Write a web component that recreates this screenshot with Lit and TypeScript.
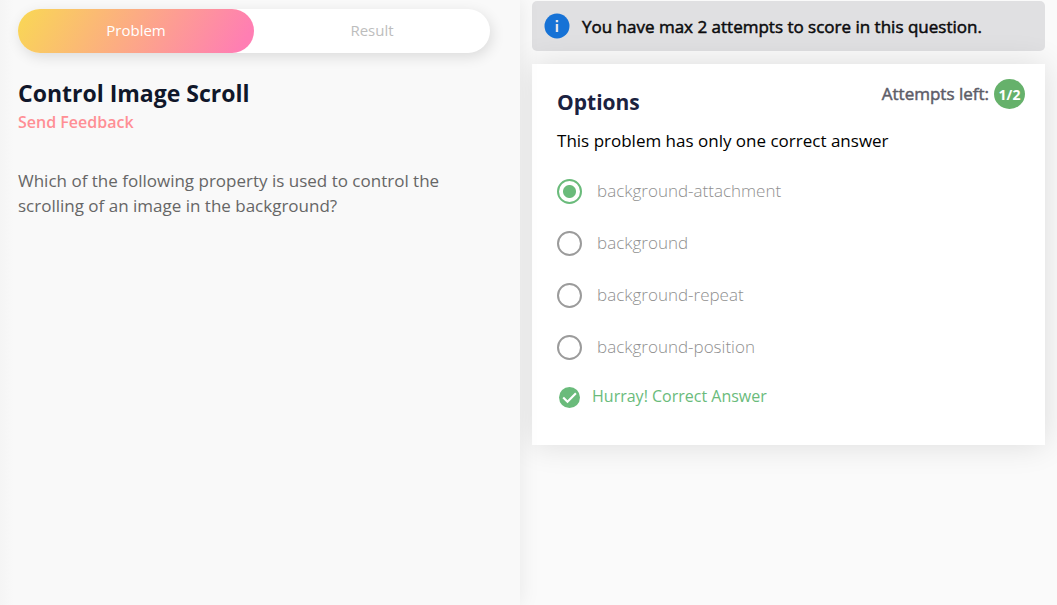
import { LitElement, html, css } from "lit";
import { customElement, state } from "lit/decorators.js";

const OPTIONS = [
  "background-attachment",
  "background",
  "background-repeat",
  "background-position",
];

@customElement("app-root")
export class AppRoot extends LitElement {
  @state() private selected = 0;

  static styles = css`
    :host {
      display: flex;
      min-height: 100vh;
      background: #fafafa;
      font-family: "Open Sans", "Noto Sans", sans-serif;
    }
    * {
      box-sizing: border-box;
    }
    h1,
    h2,
    p {
      margin: 0;
    }
    .problem {
      position: relative;
      flex: 0 0 49.2%;
      padding: 9px 30px 24px 18px;
      background: linear-gradient(90deg, #f5f5f5, #f9f9f9 14px);
      box-shadow: 0 0 20px rgba(0, 0, 0, 0.08);
      z-index: 1;
    }
    .tabs {
      display: flex;
      height: 44px;
      border-radius: 22px;
      background: #fff;
      box-shadow: 2px 4px 14px rgba(0, 0, 0, 0.12);
    }
    .tab {
      flex: 1;
      padding: 0 0 2px;
      border: 0;
      border-radius: 22px;
      background: none;
      color: #bdbdbd;
      font: 400 15px/20px "Open Sans", sans-serif;
    }
    .tab.active {
      background: linear-gradient(120deg, #f9d854, #ff7eb3 94%);
      color: #fff;
    }
    .title {
      margin-top: 26px;
      color: #10172a;
      font-size: 23px;
      font-weight: 700;
      line-height: 28px;
    }
    .feedback {
      display: inline-block;
      margin-top: 5px;
      color: #ff8f95;
      font-size: 16px;
      font-weight: 600;
      line-height: 20px;
      text-decoration: none;
    }
    .question {
      margin-top: 35px;
      padding-right: 24px;
      color: #666;
      font-size: 17px;
      line-height: 25px;
    }
    .answer {
      flex: 1;
      min-width: 0;
      padding: 1px 12px 24px;
    }
    .notice {
      display: flex;
      align-items: center;
      gap: 12px;
      height: 50px;
      padding: 0 12px;
      border-radius: 5px;
      background: #e0e0e2;
      color: #0b0b0d;
      font-size: 17px;
      -webkit-text-stroke: 0.5px;
    }
    .notice svg {
      flex: none;
    }
    .card {
      margin-top: 13px;
      padding: 15px 20px 37px 25px;
      background: #fff;
      box-shadow: 0 0 30px rgba(0, 0, 0, 0.12);
    }
    .head {
      display: flex;
      justify-content: space-between;
    }
    .options-title {
      margin-top: 9px;
      color: #1b2240;
      font-size: 21px;
      font-weight: 700;
      line-height: 28px;
    }
    .attempts {
      display: flex;
      align-items: center;
      gap: 5px;
      height: 30px;
      color: #5d5d68;
      font-size: 17px;
    }
    .attempts-label {
      padding-bottom: 2px;
      -webkit-text-stroke: 0.5px;
    }
    .count {
      display: grid;
      place-items: center;
      width: 31px;
      height: 30px;
      border-radius: 50%;
      background: #66b16b;
      color: #fff;
      font-size: 14px;
      font-weight: 700;
    }
    .hint {
      margin-top: 13px;
      color: #000;
      font-size: 17px;
      line-height: 24px;
    }
    .list {
      display: grid;
      gap: 27px;
      margin: 26px 0 0;
      padding: 0;
      border: 0;
    }
    .option {
      display: flex;
      align-items: center;
      gap: 15px;
      height: 25px;
      color: #8f8f8f;
      font-size: 17px;
      font-weight: 300;
      line-height: 22px;
    }
    .option span,
    .result span {
      padding-bottom: 2px;
    }
    .radio {
      appearance: none;
      flex: none;
      width: 25px;
      height: 25px;
      margin: 0;
      border: 2px solid #9b9b9b;
      border-radius: 50%;
    }
    .radio:checked {
      border-color: #6abb7b;
      background: radial-gradient(circle, #6abb7b 6px, transparent 7px);
    }
    .result {
      display: flex;
      align-items: center;
      gap: 12px;
      margin-top: 26px;
      padding-left: 2px;
      height: 22px;
      color: #6abb7b;
      font-size: 16px;
    }
  `;

  render() {
    return html`
      <section class="problem">
        <div class="tabs" role="tablist">
          <button class="tab active" role="tab" aria-selected="true">Problem</button>
          <button class="tab" role="tab" aria-selected="false">Result</button>
        </div>
        <h1 class="title">Control Image Scroll</h1>
        <a class="feedback" href="#">Send Feedback</a>
        <p class="question">
          Which of the following property is used to control the scrolling of an
          image in the background?
        </p>
      </section>
      <main class="answer">
        <div class="notice">
          <svg width="26" height="26" viewBox="0 0 26 26" aria-hidden="true">
            <circle cx="13" cy="13" r="12.5" fill="#1672d6" />
            <path d="M11.8 7h2.4v2.3h-2.4zM11.8 11h2.4v8h-2.4z" fill="#e4e4ea" />
          </svg>
          <span>You have max 2 attempts to score in this question.</span>
        </div>
        <div class="card">
          <div class="head">
            <h2 class="options-title">Options</h2>
            <div class="attempts">
              <span class="attempts-label">Attempts left:</span>
              <span class="count">1/2</span>
            </div>
          </div>
          <p class="hint" id="hint">This problem has only one correct answer</p>
          <fieldset class="list" aria-labelledby="hint">
            ${OPTIONS.map(
              (name, i) => html`
                <label class="option">
                  <input
                    class="radio"
                    type="radio"
                    name="answer"
                    .checked=${this.selected === i}
                    @change=${() => (this.selected = i)}
                  />
                  <span>${name}</span>
                </label>
              `,
            )}
          </fieldset>
          <div class="result">
            <svg width="21" height="21" viewBox="0 0 21 21" aria-hidden="true">
              <circle cx="10.5" cy="10.5" r="10.5" fill="#6abb7b" />
              <path d="M4.2 10.4l4.3 4.4 8.4-8.6" fill="none" stroke="#fff" stroke-width="2.1" />
            </svg>
            <span>Hurray! Correct Answer</span>
          </div>
        </div>
      </main>
    `;
  }
}
